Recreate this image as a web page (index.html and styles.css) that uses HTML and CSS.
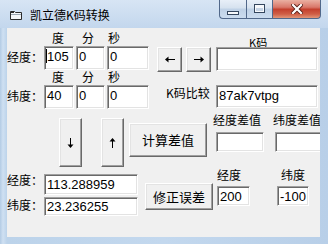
FILE: index.html
```html
<!DOCTYPE html>
<html>
<head>
<meta charset="utf-8">
<link rel="stylesheet" href="styles.css">
</head>
<body>
<div class="window">
  <div class="titlebar">
    <svg class="appicon" width="12" height="10" viewBox="0 0 12 10">
      <path d="M0.5 1.5 H4.5 L5.5 2.5 H11.5 V9.5 H0.5 Z" fill="#f4f6f8" stroke="#2b2b2b"/>
      <rect x="1" y="2" width="3" height="1" fill="#2b2b2b"/>
      <rect x="1" y="4" width="10" height="1" fill="#9aa6b2"/>
    </svg>
    <span class="title">凯立德K码转换</span>
    <div class="caps">
      <div class="cap min"><span class="min-glyph"></span></div>
      <div class="cap max"><span class="max-glyph"></span></div>
      <div class="cap close">
        <svg width="12" height="10" viewBox="0 0 12 10">
          <path d="M2 1 L10 9 M10 1 L2 9" stroke="#5a2018" stroke-width="4" stroke-linecap="square"/>
          <path d="M2 1 L10 9 M10 1 L2 9" stroke="#ffffff" stroke-width="2.2" stroke-linecap="square"/>
        </svg>
      </div>
    </div>
  </div>
  <div class="client">
    <div class="hdr hdr1">
      <span class="h-du">度</span><span class="h-fen">分</span><span class="h-miao">秒</span><span class="h-k">K码</span>
    </div>
    <div class="row r1">
      <span class="lbl side">经度：</span>
      <div class="tb w-d"><span class="caret"></span>105</div>
      <div class="tb w-f">0</div>
      <div class="tb w-s">0</div>
      <div class="btn b-left">
        <svg width="10" height="7" viewBox="0 0 10 7"><rect x="2" y="3" width="8" height="1" fill="#000"/><path d="M0 3.5 L3.5 0.5 L3.5 6.5 Z" fill="#000"/></svg>
      </div>
      <div class="btn b-right">
        <svg width="10" height="7" viewBox="0 0 10 7"><rect x="0" y="3" width="8" height="1" fill="#000"/><path d="M10 3.5 L6.5 0.5 L6.5 6.5 Z" fill="#000"/></svg>
      </div>
      <div class="tb w-k"></div>
    </div>
    <div class="hdr hdr2">
      <span class="h-du">度</span><span class="h-fen">分</span><span class="h-miao">秒</span>
    </div>
    <div class="row r2">
      <span class="lbl side">纬度：</span>
      <div class="tb w-d">40</div>
      <div class="tb w-f">0</div>
      <div class="tb w-s">0</div>
      <span class="lbl kcmp">K码比较</span>
      <div class="tb w-k2">87ak7vtpg</div>
    </div>
    <div class="row r3">
      <div class="btn b-down">
        <svg width="7" height="10" viewBox="0 0 7 10"><rect x="3" y="0" width="1" height="8" fill="#000"/><path d="M3.5 10 L0.5 6.5 L6.5 6.5 Z" fill="#000"/></svg>
      </div>
      <div class="btn b-up">
        <svg width="7" height="10" viewBox="0 0 7 10"><rect x="3" y="2" width="1" height="8" fill="#000"/><path d="M3.5 0 L0.5 3.5 L6.5 3.5 Z" fill="#000"/></svg>
      </div>
      <div class="btn b-calc">计算差值</div>
      <div class="col diff1">
        <span class="lbl">经度差值</span>
        <div class="tb w-diff1"></div>
      </div>
      <div class="col diff2">
        <span class="lbl">纬度差值</span>
        <div class="tb w-diff2"></div>
      </div>
    </div>
    <div class="row r4">
      <div class="col res">
        <div class="pair p1">
          <span class="lbl side">经度：</span>
          <div class="tb w-res h1">113.288959</div>
        </div>
        <div class="pair p2">
          <span class="lbl side">纬度：</span>
          <div class="tb w-res h2">23.236255</div>
        </div>
      </div>
      <div class="btn b-fix">修正误差</div>
      <div class="col off1">
        <span class="lbl">经度</span>
        <div class="tb w-off1">200</div>
      </div>
      <div class="col off2">
        <span class="lbl">纬度</span>
        <div class="tb w-off2">-100</div>
      </div>
    </div>
  </div>
</div>
</body>
</html>
```

FILE: styles.css
```css
* { box-sizing: border-box; }

body {
  margin: 0;
  width: 328px;
  height: 244px;
  overflow: hidden;
}

.window {
  width: 328px;
  height: 244px;
  display: flex;
  flex-direction: column;
  background: linear-gradient(to right, #b3cbe4 0, #cfe0f2 3px, #bcd3ea 7px, #c3d8ee 50%, #b8cfe8 100%);
}

.titlebar {
  height: 28px;
  flex: 0 0 28px;
  display: flex;
  align-items: flex-start;
  background: linear-gradient(#d7e5f4, #c3d7ed);
}

.appicon {
  margin: 10px 0 0 10px;
}

.title {
  margin: 7px 0 0 8px;
  font-family: "Noto Sans CJK SC", sans-serif;
  font-size: 12px;
  line-height: 16px;
  color: #000;
}

.caps {
  margin-left: auto;
  margin-right: 7px;
  display: flex;
  height: 19px;
}

.cap {
  height: 19px;
  border: 1px solid #51688a;
  border-top: none;
  display: flex;
  align-items: center;
  justify-content: center;
}

.cap.min,
.cap.max {
  background: linear-gradient(#e8eff8, #d6e2ef 45%, #bfd1e6 50%, #cbdcef);
  border-right: none;
}

.cap.min {
  width: 27px;
  border-bottom-left-radius: 4px;
  align-items: flex-end;
  padding-bottom: 3px;
}

.cap.max {
  width: 26px;
}

.cap.close {
  width: 49px;
  border-bottom-right-radius: 4px;
  background: linear-gradient(#eab0a2, #d9786a 40%, #c4402e 52%, #cf5e46 78%, #e29678);
}

.min-glyph {
  width: 12px;
  height: 4px;
  background: #f6f8fb;
  border: 1px solid #34465e;
}

.max-glyph {
  width: 11px;
  height: 9px;
  background: #c7d5e6;
  border: 1px solid #34465e;
  box-shadow: inset 0 0 0 1px #f6f8fb, inset 0 3px 0 0 #f6f8fb;
  margin-top: -1px;
}

.client {
  margin-left: 7px;
  width: 313px;
  height: 209px;
  flex: 0 0 209px;
  background: #f0f0f0;
  overflow: hidden;
  font-family: "Noto Sans CJK SC", sans-serif;
  font-size: 12px;
  line-height: 14px;
  color: #000;
}

.hdr {
  display: flex;
  align-items: flex-start;
}

.hdr1 {
  height: 18px;
  padding-top: 3px;
}

.hdr2 {
  height: 15px;
}

.h-du { margin-left: 45px; }
.h-fen { margin-left: 18px; }
.h-miao { margin-left: 14px; }
.h-k {
  margin-left: 129px;
  margin-top: 4px;
  font-size: 11px;
}

.row {
  display: flex;
  align-items: flex-start;
}

.row > *,
.pair > * {
  flex-shrink: 0;
}

.r1, .r2 { height: 24px; }
.r3 { height: 58px; }
.r4 { height: 70px; }

.lbl {
  white-space: nowrap;
}

.side {
  width: 37px;
  margin-top: 4px;
}

.tb {
  height: 24px;
  background: #fff;
  border: 1px solid;
  border-color: #a0a0a0 #ffffff #ffffff #a0a0a0;
  box-shadow: inset 1px 1px 0 #696969, inset -1px -1px 0 #e3e3e3;
  font-family: "Liberation Sans", Arial, sans-serif;
  font-size: 13px;
  line-height: 15px;
  padding: 2px 2px 0 2px;
  white-space: nowrap;
  overflow: hidden;
  display: flex;
  align-items: flex-start;
}

.caret {
  display: inline-block;
  width: 1px;
  height: 14px;
  margin-left: -1px;
  background: #000;
}

.w-d { width: 30px; }
.w-f { width: 29px; margin-left: 2px; }
.w-s { width: 42px; margin-left: 2px; }

.w-k {
  width: 102px;
  margin-left: 5px;
  margin-top: 1px;
}

.btn {
  background: #f0f0f0;
  border: 1px solid;
  border-color: #ffffff #696969 #696969 #ffffff;
  box-shadow: inset -1px -1px 0 #a0a0a0, inset 1px 1px 0 #e3e3e3;
  display: flex;
  align-items: center;
  justify-content: center;
}

.b-left {
  width: 25px;
  height: 25px;
  margin-left: 8px;
  margin-top: 1px;
}

.b-right {
  width: 25px;
  height: 25px;
  margin-left: 4px;
  margin-top: 1px;
}

.kcmp {
  margin-left: 17px;
  width: 50px;
  margin-top: 1px;
}

.w-k2 {
  width: 102px;
  height: 23px;
}

.b-down,
.b-up {
  width: 23px;
  height: 49px;
  margin-top: 9px;
}

.b-down { margin-left: 52px; }
.b-up { margin-left: 19px; }

.b-calc {
  width: 78px;
  height: 34px;
  margin-left: 5px;
  margin-top: 14px;
  font-size: 13px;
}

.col {
  display: flex;
  flex-direction: column;
  align-items: flex-start;
}

.diff1 {
  margin-left: 6px;
}

.diff1 .lbl,
.diff2 .lbl {
  margin-top: 4px;
}

.w-diff1 {
  width: 48px;
  height: 20px;
  margin-left: 3px;
  margin-top: 5px;
}

.diff2 {
  margin-left: 9px;
}

.w-diff2 {
  width: 50px;
  height: 20px;
  margin-left: 2px;
  margin-top: 5px;
}

.pair {
  display: flex;
  align-items: flex-start;
}

.p1 { margin-top: 7px; }
.p2 { margin-top: 2px; }

.p1 .side { margin-top: -1px; }
.p2 .side { margin-top: 1px; }

.w-res { width: 94px; }
.w-res.h1 { height: 21px; }
.w-res.h2 { height: 19px; padding-top: 1px; }

.b-fix {
  width: 68px;
  height: 27px;
  margin-left: 7px;
  margin-top: 16px;
  font-size: 13px;
}

.off1 { margin-left: 4px; }

.off1 .lbl,
.off2 .lbl {
  margin-top: 1px;
}

.off2 { margin-left: 27px; }
.off2 .lbl { margin-left: 4px; }

.w-off1 {
  width: 33px;
  height: 20px;
  margin-top: 4px;
}

.w-off2 {
  width: 32px;
  height: 20px;
  margin-top: 4px;
}
```
